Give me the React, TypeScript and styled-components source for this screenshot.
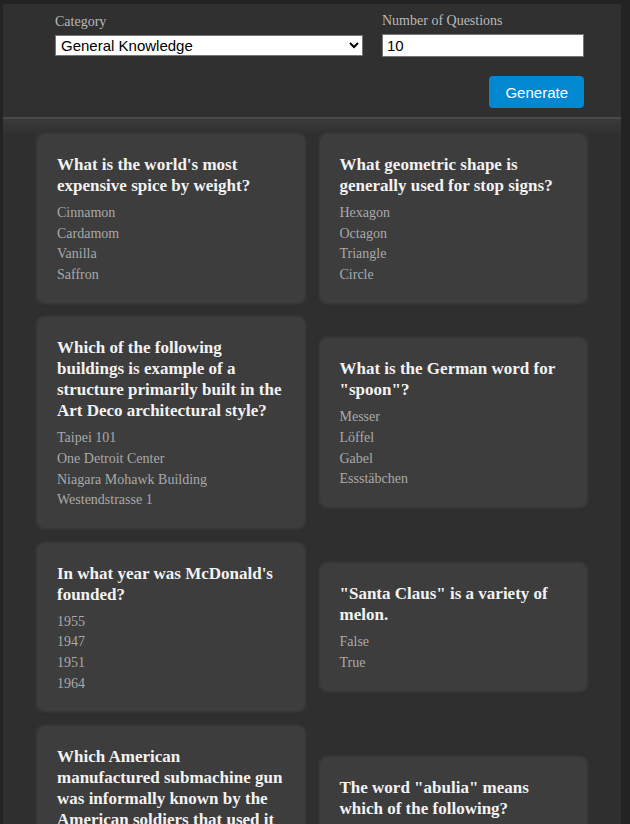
import React from "react";
import styled, { createGlobalStyle } from "styled-components";

const GlobalStyle = createGlobalStyle`
  html { scrollbar-width: none; }
  html::-webkit-scrollbar { display: none; }
  body {
    margin: 0;
    background: #232323;
    font-family: "Liberation Serif", "Times New Roman", serif;
  }
`;

const Page = styled.div`
  margin: 4px 9px 0 3px;
  background: #303030;
  min-height: 820px;
`;

const Header = styled.header`
  padding: 9px 37px 9px 52px;
  display: flex;
  flex-direction: column;
`;

const FieldRow = styled.div`
  display: grid;
  grid-template-columns: 308px minmax(0, 1fr);
  column-gap: 19px;
  align-items: center;
`;

const Field = styled.label`
  display: flex;
  flex-direction: column;
  gap: 5px;
  min-width: 0;
`;

const Label = styled.span`
  font-size: 14px;
  line-height: 16px;
  color: #b9b9b9;
`;

const Select = styled.select`
  height: 21px;
  font-family: "Liberation Sans", Arial, sans-serif;
  font-size: 15px;
  color: #000;
  background: #fff;
  border: 1px solid #767676;
  border-radius: 0;
  padding: 0 1px;
  margin: 0;
`;

const Input = styled.input`
  width: 100%;
  min-width: 0;
  height: 23px;
  box-sizing: border-box;
  font-family: "Liberation Sans", Arial, sans-serif;
  font-size: 15px;
  color: #000;
  background: #fff;
  border: 1px solid #767676;
  padding: 0 4px;
  margin: 0;
`;

const Actions = styled.div`
  display: flex;
  justify-content: flex-end;
  margin-top: 19px;
`;

const Button = styled.button`
  height: 32px;
  padding: 0 16px;
  border: none;
  border-radius: 4px;
  background: #0288d1;
  color: #fff;
  font-family: "Liberation Sans", Arial, sans-serif;
  font-size: 15px;
  cursor: pointer;
`;

const List = styled.main`
  border-top: 2px solid #4a4a4a;
  background: linear-gradient(#3a3a3a, #2f2f2f 16px);
  padding: 16px 35px 40px;
  display: grid;
  grid-template-columns: 1fr 1fr;
  column-gap: 17px;
  row-gap: 16.5px;
  align-items: center;
`;

const Card = styled.article`
  background: #3d3d3d;
  border-radius: 6px;
  box-shadow: 0 0 4px rgba(110, 110, 110, 0.55);
  padding: 19px 19px 16px;
  display: flex;
  flex-direction: column;
  gap: 7px;
`;

const Question = styled.h3`
  margin: 0;
  font-size: 17px;
  line-height: 21px;
  font-weight: bold;
  color: #f2f2f2;
`;

const Options = styled.ul`
  list-style: none;
  margin: 0;
  padding: 0;
`;

const Option = styled.li`
  font-size: 14px;
  line-height: 20.7px;
  color: #a9a9a9;
`;

type Q = { q: string; a: string[] };

const questions: Q[] = [
  { q: "What is the world's most expensive spice by weight?", a: ["Cinnamon", "Cardamom", "Vanilla", "Saffron"] },
  { q: "What geometric shape is generally used for stop signs?", a: ["Hexagon", "Octagon", "Triangle", "Circle"] },
  {
    q: "Which of the following buildings is example of a structure primarily built in the Art Deco architectural style?",
    a: ["Taipei 101", "One Detroit Center", "Niagara Mohawk Building", "Westendstrasse 1"],
  },
  { q: 'What is the German word for "spoon"?', a: ["Messer", "Löffel", "Gabel", "Essstäbchen"] },
  { q: "In what year was McDonald's founded?", a: ["1955", "1947", "1951", "1964"] },
  { q: '"Santa Claus" is a variety of melon.', a: ["False", "True"] },
  {
    q: 'Which American manufactured submachine gun was informally known by the American soldiers that used it as "Grease Gun"?',
    a: ["M3", "Thompson", "M1A1", "Colt 9mm"],
  },
  {
    q: 'The word "abulia" means which of the following?',
    a: ["The inability to make decisions", "The inability to stand up", "The inability to concentrate", "A feverish desire to rip one's clothes off"],
  },
  { q: "Which of these colours is NOT featured in the logo for Google?", a: ["Yellow", "Blue", "Pink", "Green"] },
  { q: "What is the largest organ of the human body?", a: ["Heart", "Skin", "Liver", "Lungs"] },
];

export default function App() {
  return (
    <>
      <GlobalStyle />
      <Page>
        <Header>
          <FieldRow>
            <Field>
              <Label>Category</Label>
              <Select defaultValue="9">
                <option value="9">General Knowledge</option>
                <option value="10">Entertainment: Books</option>
                <option value="17">Science &amp; Nature</option>
              </Select>
            </Field>
            <Field>
              <Label>Number of Questions</Label>
              <Input type="text" defaultValue="10" />
            </Field>
          </FieldRow>
          <Actions>
            <Button type="button">Generate</Button>
          </Actions>
        </Header>
        <List>
          {questions.map((item, i) => (
            <Card key={i}>
              <Question>{item.q}</Question>
              <Options>
                {item.a.map((opt) => (
                  <Option key={opt}>{opt}</Option>
                ))}
              </Options>
            </Card>
          ))}
        </List>
      </Page>
    </>
  );
}
